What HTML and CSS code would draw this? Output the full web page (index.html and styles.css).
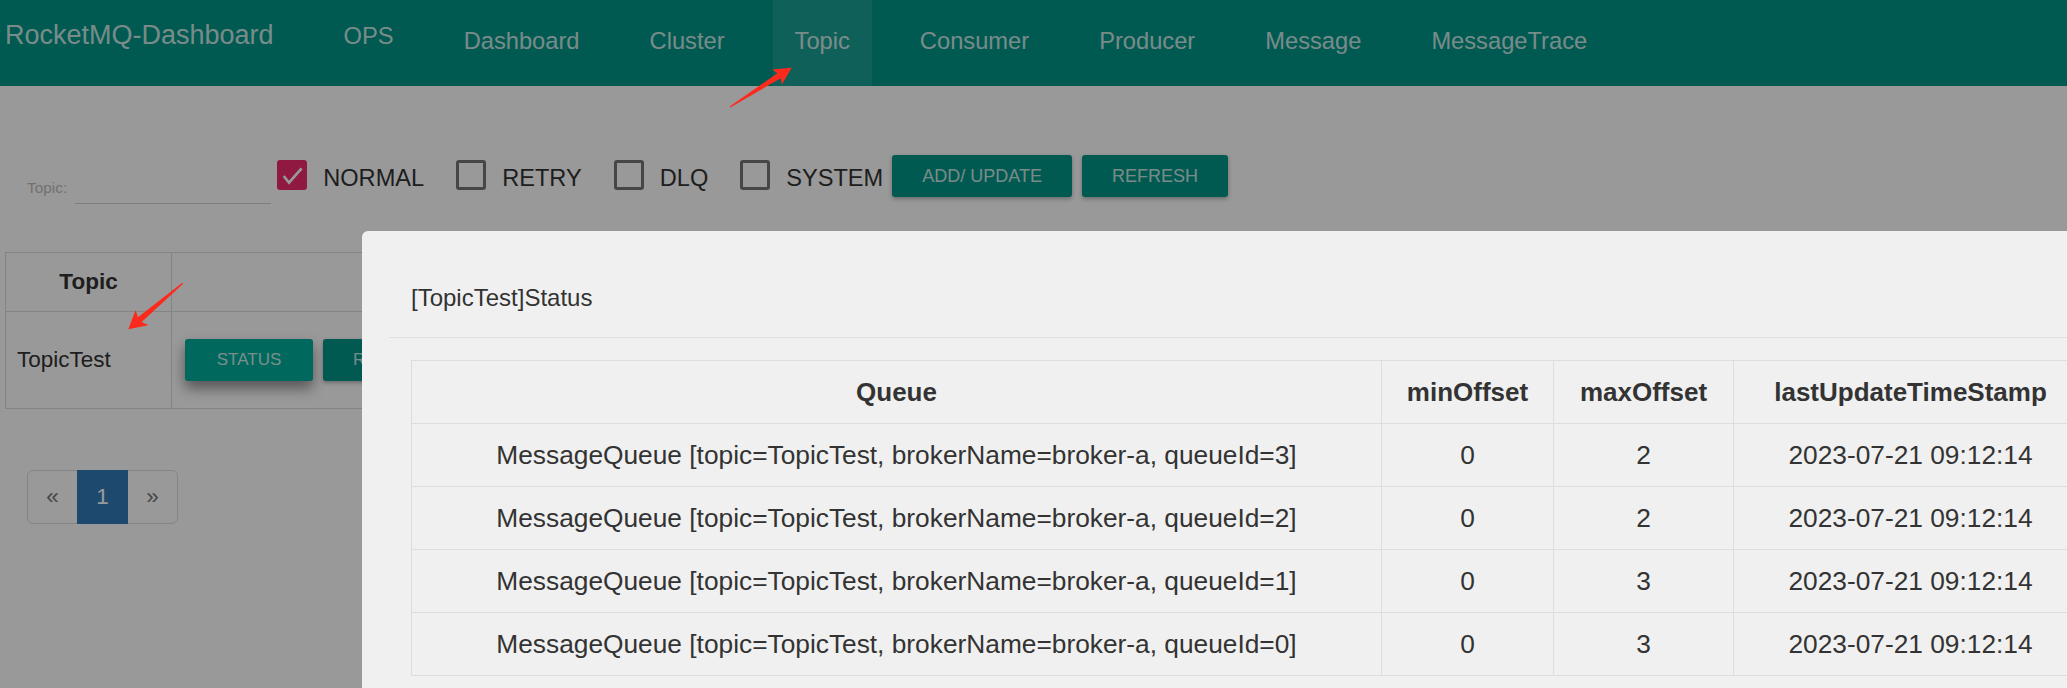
FILE: index.html
```html
<!DOCTYPE html>
<html lang="en">
<head>
<meta charset="utf-8">
<title>RocketMQ-Dashboard</title>
<link rel="stylesheet" href="styles.css">
</head>
<body>
<nav class="navbar">
  <a class="brand">RocketMQ-Dashboard</a>
  <ul class="nav">
    <li><a class="nav-link ops">OPS</a></li>
    <li><a class="nav-link">Dashboard</a></li>
    <li><a class="nav-link">Cluster</a></li>
    <li><a class="nav-link active">Topic</a></li>
    <li><a class="nav-link">Consumer</a></li>
    <li><a class="nav-link">Producer</a></li>
    <li><a class="nav-link">Message</a></li>
    <li><a class="nav-link">MessageTrace</a></li>
  </ul>
</nav>

<main class="content">
  <div class="toolbar">
    <div class="filter">
      <label class="filter-label">Topic:</label>
      <div class="filter-input"></div>
    </div>
    <div class="checks">
      <div class="check">
        <span class="box checked">
          <svg width="24" height="24" viewBox="0 0 24 24"><path d="M3.7 13 L9 19.7 L21.6 5.3" fill="none" stroke="#fff" stroke-width="2.6"/></svg>
        </span>
        <span class="check-label">NORMAL</span>
      </div>
      <div class="check"><span class="box"></span><span class="check-label">RETRY</span></div>
      <div class="check"><span class="box"></span><span class="check-label">DLQ</span></div>
      <div class="check"><span class="box"></span><span class="check-label">SYSTEM</span></div>
    </div>
    <button class="btn btn-tool first">ADD/ UPDATE</button>
    <button class="btn btn-tool">REFRESH</button>
  </div>

  <table class="topic-table">
    <colgroup><col class="tc-topic"><col class="tc-ops"></colgroup>
    <thead><tr><th>Topic</th><th></th></tr></thead>
    <tbody>
      <tr>
        <td class="topic-name">TopicTest</td>
        <td class="ops-cell">
          <button class="btn btn-op btn-status">STATUS</button><button class="btn btn-op">ROUTER</button><button class="btn btn-op">CONSUMER MANAGE</button><button class="btn btn-op">TOPIC CONFIG</button>
        </td>
      </tr>
    </tbody>
  </table>

  <ul class="pagination">
    <li><a class="page first">&laquo;</a></li>
    <li><a class="page active">1</a></li>
    <li><a class="page last">&raquo;</a></li>
  </ul>
</main>

<div class="backdrop"></div>

<div class="modal">
  <div class="modal-header">[TopicTest]Status</div>
  <div class="modal-body">
    <table class="qtable">
      <colgroup><col class="c-queue"><col class="c-min"><col class="c-max"><col class="c-time"></colgroup>
      <thead>
        <tr><th>Queue</th><th>minOffset</th><th>maxOffset</th><th>lastUpdateTimeStamp</th></tr>
      </thead>
      <tbody>
        <tr><td>MessageQueue [topic=TopicTest, brokerName=broker-a, queueId=3]</td><td>0</td><td>2</td><td>2023-07-21 09:12:14</td></tr>
        <tr><td>MessageQueue [topic=TopicTest, brokerName=broker-a, queueId=2]</td><td>0</td><td>2</td><td>2023-07-21 09:12:14</td></tr>
        <tr><td>MessageQueue [topic=TopicTest, brokerName=broker-a, queueId=1]</td><td>0</td><td>3</td><td>2023-07-21 09:12:14</td></tr>
        <tr><td>MessageQueue [topic=TopicTest, brokerName=broker-a, queueId=0]</td><td>0</td><td>3</td><td>2023-07-21 09:12:14</td></tr>
      </tbody>
    </table>
  </div>
</div>

<svg class="annotations" width="2067" height="688" viewBox="0 0 2067 688">
  <polygon class="arrow" points="730.3,107.5 780.7,78.2 781.8,84.7 791.7,67.7 772.1,69.5 777.5,73.2 729.7,106.5"/>
  <polygon class="arrow" points="183.1,283.8 141.7,321.9 148.5,325.3 128.3,329.3 135.6,310.1 137.9,317.3 182.3,282.8"/>
</svg>
</body>
</html>
```

FILE: styles.css
```css
html, body {
  margin: 0;
  padding: 0;
  overflow: hidden;
  width: 2067px;
  height: 688px;
  background: #ffffff;
  font-family: "Liberation Sans", Arial, Helvetica, sans-serif;
  color: #333333;
}

/* ---------- navbar ---------- */
.navbar {
  display: flex;
  height: 86px;
  background: #009688;
  padding-left: 5px;
}
.brand {
  font-size: 27px;
  line-height: 27px;
  padding-top: 22px;
  color: rgba(255, 255, 255, 0.8);
  white-space: nowrap;
}
.nav {
  display: flex;
  list-style: none;
  margin: 0 0 0 48px;
  padding: 0;
  gap: 26px;
}
.nav-link {
  display: block;
  box-sizing: border-box;
  height: 86px;
  padding: 29px 22px 0;
  font-size: 23.7px;
  line-height: 24px;
  color: rgba(255, 255, 255, 0.8);
  white-space: nowrap;
}
.nav-link.ops { padding-top: 24px; }
.nav-link.active { background: rgba(255, 255, 255, 0.1); }

/* ---------- toolbar ---------- */
.content { padding: 0; }
.toolbar {
  display: flex;
  align-items: flex-start;
  height: 42px;
  margin-top: 69px;
  padding-left: 27px;
}
.filter {
  display: flex;
  align-items: flex-end;
  height: 49px;
}
.filter-label {
  font-size: 15.4px;
  line-height: 17px;
  margin-bottom: 7.7px;
  color: #bdbdbd;
}
.filter-input {
  width: 196px;
  height: 20px;
  margin-left: 8px;
  border-bottom: 1px solid #d2d2d2;
}
.checks {
  display: flex;
  margin-left: 6px;
  gap: 32px;
}
.check {
  display: flex;
  align-items: flex-start;
}
.box {
  box-sizing: border-box;
  width: 30px;
  height: 30px;
  margin-top: 5px;
  border: 3px solid #757575;
  border-radius: 3px;
  display: flex;
  align-items: center;
  justify-content: center;
}
.box.checked {
  background: #ee2a6c;
  border-color: #ee2a6c;
}
.box svg { display: block; }
.check-label {
  margin-left: 16px;
  margin-top: 11px;
  font-size: 23.6px;
  line-height: 24px;
  color: #333333;
  white-space: nowrap;
}

.btn {
  font-family: "Liberation Sans", Arial, Helvetica, sans-serif;
  border: 0;
  border-radius: 3px;
  background: #009688;
  color: rgba(255, 255, 255, 0.8);
  cursor: pointer;
  white-space: nowrap;
}
.btn-tool {
  height: 42px;
  padding: 0 30px;
  font-size: 18px;
  line-height: 42px;
  margin-left: 10px;
  box-shadow: 0 2px 4px rgba(0, 0, 0, 0.3);
}
.btn-tool.first { margin-left: 9px; }

/* ---------- topic table ---------- */
.topic-table {
  border-collapse: collapse;
  table-layout: fixed;
  width: 1400px;
  margin: 55px 0 0 5px;
  font-size: 22.5px;
  color: #333333;
}
.tc-topic { width: 166px; }
.topic-table th,
.topic-table td {
  border: 1px solid #dddddd;
  padding: 0;
}
.topic-table th {
  height: 58px;
  font-weight: bold;
  text-align: center;
  vertical-align: middle;
}
.topic-table td {
  height: 96px;
  vertical-align: middle;
}
.topic-name { padding-left: 11px !important; }
.ops-cell {
  padding-left: 13px !important;
  white-space: nowrap;
}
.btn-op {
  height: 42px;
  padding: 0 30px;
  font-size: 17px;
  line-height: 42px;
  margin-right: 10px;
  box-shadow: 0 2px 4px rgba(0, 0, 0, 0.3);
}
.btn-status {
  width: 128px;
  padding: 0;
  background: #00ae9c;
  box-shadow: 0 7px 14px rgba(0, 0, 0, 0.45);
}

/* ---------- pagination ---------- */
.pagination {
  display: flex;
  list-style: none;
  margin: 61px 0 0 27px;
  padding: 0;
}
.page {
  display: block;
  box-sizing: border-box;
  width: 51px;
  height: 54px;
  margin-left: -1px;
  border: 1px solid #dddddd;
  font-size: 22.5px;
  line-height: 52px;
  text-align: center;
  color: #777777;
}
.page.first { margin-left: 0; border-radius: 6px 0 0 6px; }
.page.last { border-radius: 0 6px 6px 0; }
.page.active {
  background: #337ab7;
  border-color: #337ab7;
  color: #ffffff;
  position: relative;
}

/* ---------- modal ---------- */
.backdrop {
  position: fixed;
  inset: 0;
  background: rgba(0, 0, 0, 0.4);
}
.modal {
  position: fixed;
  left: 362px;
  top: 231px;
  width: 1780px;
  height: 560px;
  background: #f0f0f0;
  border-radius: 6px;
}
.modal-header {
  margin-left: 27px;
  padding: 55px 22px 27px;
  font-size: 24px;
  line-height: 24px;
  color: #333333;
  border-bottom: 1px solid #e0e0e0;
}
.modal-body {
  padding: 22px 0 0 49px;
}
.qtable {
  border-collapse: collapse;
  table-layout: fixed;
  width: 1676px;
  font-size: 26px;
  color: #333333;
}
.c-queue { width: 970px; }
.c-min { width: 172px; }
.c-max { width: 180px; }
.c-time { width: 354px; }
.qtable th,
.qtable td {
  border: 1px solid #dddddd;
  padding: 0;
  text-align: center;
  vertical-align: middle;
  white-space: nowrap;
}
.qtable th { height: 62px; font-weight: bold; }
.qtable td { height: 62px; font-size: 26.3px; }

/* ---------- annotations ---------- */
.annotations {
  position: fixed;
  left: 0;
  top: 0;
  pointer-events: none;
}
.arrow { fill: #fb2a1c; }
```
